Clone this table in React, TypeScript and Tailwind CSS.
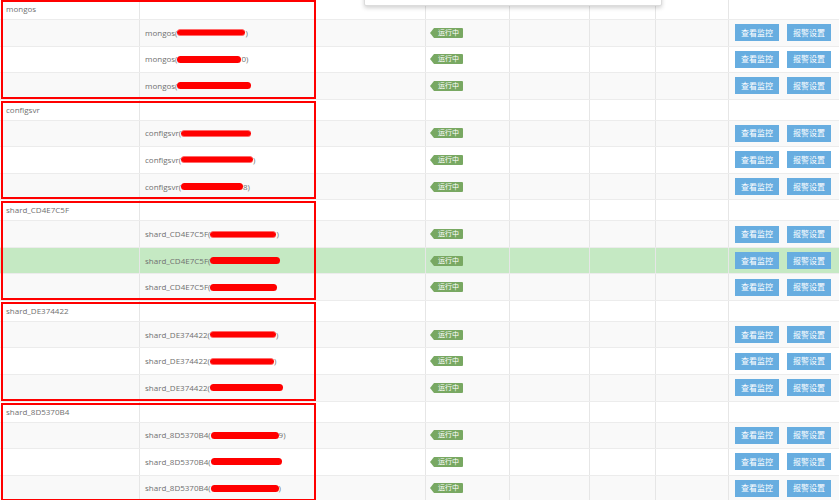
import React from 'react';

type Member = { blob: number; suffix: string; dashed?: boolean };

const groups: { name: string; members: Member[] }[] = [
  {
    name: 'mongos',
    members: [
      { blob: 68, suffix: ')', dashed: true },
      { blob: 64, suffix: '0)' },
      { blob: 74, suffix: '' },
    ],
  },
  {
    name: 'configsvr',
    members: [
      { blob: 70, suffix: '', dashed: true },
      { blob: 72, suffix: ')', dashed: true },
      { blob: 62, suffix: '8)' },
    ],
  },
  {
    name: 'shard_CD4E7C5F',
    members: [
      { blob: 66, suffix: ')', dashed: true },
      { blob: 70, suffix: '' },
      { blob: 67, suffix: '' },
    ],
  },
  {
    name: 'shard_DE374422',
    members: [
      { blob: 66, suffix: ')', dashed: true },
      { blob: 64, suffix: ')', dashed: true },
      { blob: 73, suffix: '' },
    ],
  },
  {
    name: 'shard_8D5370B4',
    members: [
      { blob: 68, suffix: '9)' },
      { blob: 71, suffix: '' },
      { blob: 68, suffix: ')' },
    ],
  },
];

const cell = 'h-full border-r border-[#e6e6e6] flex items-center';

function EmptyCells() {
  return (
    <>
      <div className={`${cell} w-[84px]`} />
      <div className={`${cell} w-[80px]`} />
      <div className={`${cell} w-[66px]`} />
      <div className={`${cell} w-[73px]`} />
    </>
  );
}

function Badge() {
  return (
    <div className="flex items-center ml-[4px]">
      <div className="w-0 h-0 border-y-[5px] border-y-transparent border-r-[4px] border-r-[#78a862]" />
      <div className="h-[10px] px-[4px] bg-[#78a862] text-white text-[7px] leading-[10px] rounded-r-[1px]">运行中</div>
    </div>
  );
}

function Row({ m, name, highlight, striped }: { m: Member; name: string; highlight?: boolean; striped: boolean }) {
  const bg = highlight ? 'bg-[#c5e9c3]' : striped ? 'bg-[#f9f9f9]' : 'bg-white';
  return (
    <div className={`flex h-[26.55px] border-b border-[#ececec] ${bg}`}>
      <div className={`${cell} w-[140px]`} />
      <div className={`${cell} w-[286px] pl-[5px] text-[8px] text-[#707070]`}>
        <span>{name}(</span>
        <span
          className={`inline-block h-[7px] rounded-full bg-[#ff0000] ${m.dashed ? 'border-y border-[#ff6b6b]' : ''}`}
          style={{ width: m.blob }}
        />
        <span>{m.suffix}</span>
      </div>
      <div className={`${cell} w-[84px]`}>
        <Badge />
      </div>
      <div className={`${cell} w-[80px]`} />
      <div className={`${cell} w-[66px]`} />
      <div className={`${cell} w-[73px]`} />
      <div className="h-full flex items-center gap-[8px] pl-[6px]">
        <button className="w-[44px] h-[17px] bg-[#67ade0] text-white text-[8px] leading-none">查看监控</button>
        <button className="w-[44px] h-[17px] bg-[#67ade0] text-white text-[8px] leading-none">报警设置</button>
      </div>
    </div>
  );
}

export default function App() {
  return (
    <div
      className="relative w-[839px] h-[500px] overflow-hidden bg-white"
      style={{ fontFamily: '"Open Sans", "Noto Sans CJK SC", sans-serif' }}
    >
      <div className="-mt-[1px]">
        {groups.map((g, gi) => (
          <div key={g.name} className="relative">
            <div className="flex h-[21px] border-b border-[#ececec] bg-white">
              <div className={`${cell} w-[140px] pl-[6px] text-[8px] text-[#707070]`}>{g.name}</div>
              <div className={`${cell} w-[286px]`} />
              <EmptyCells />
            </div>
            {g.members.map((m, i) => (
              <Row key={i} m={m} name={g.name} striped={i !== 1} highlight={gi === 2 && i === 1} />
            ))}
            <div className="absolute left-[1px] top-[1px] bottom-[1px] w-[315px] border-2 border-[#ff0000] pointer-events-none" />
          </div>
        ))}
      </div>
      <div className="absolute left-[364px] -top-[10px] w-[298px] h-[16px] bg-white border border-[#dcdcdc] rounded-b-[2px] shadow-[0_2px_4px_rgba(0,0,0,0.18)]" />
    </div>
  );
}
